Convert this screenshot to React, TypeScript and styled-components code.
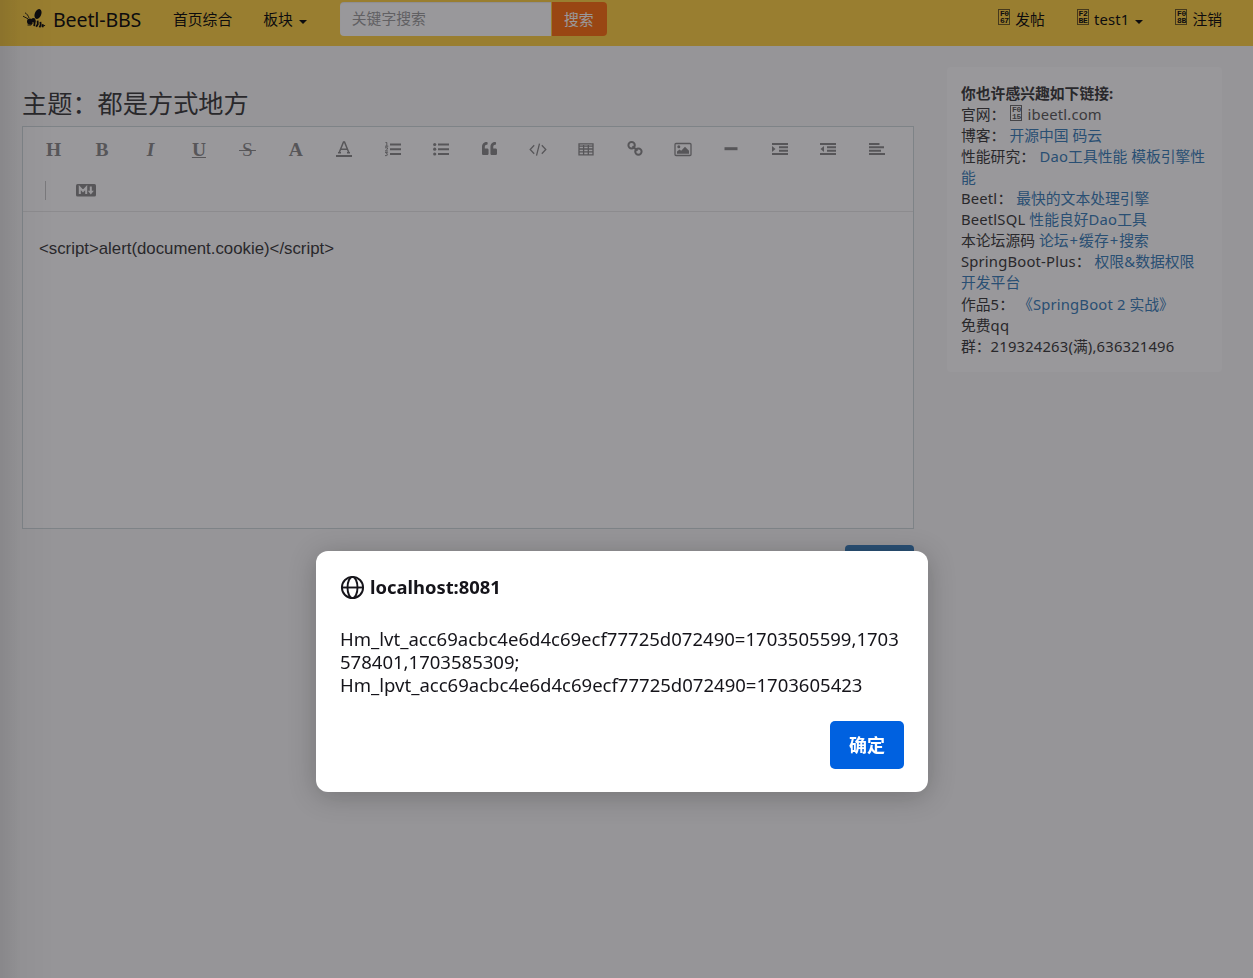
import React from "react";
import styled, { createGlobalStyle } from "styled-components";
import { FaQuoteLeft } from "react-icons/fa";

const GlobalStyle = createGlobalStyle`
  * { box-sizing: border-box; }
  body {
    margin: 0;
    background: #fafafa;
    color: #333;
    font: 14.8px/21.15px "Noto Sans", "Noto Sans CJK SC", sans-serif;
    text-spacing-trim: space-all;
    overflow: hidden;
  }
`;

const Page = styled.div`
  height: 978px;
  width: 1253px;
`;

const Header = styled.header`
  display: flex;
  align-items: flex-start;
  height: 46px;
  padding: 0 31px 0 22px;
  background: #ffd03c;
  color: #000;
`;

const NavText = styled.span<{ $left?: number }>`
  display: flex;
  align-items: center;
  height: 40px;
  margin-left: ${(p) => p.$left ?? 0}px;
  white-space: nowrap;
`;

const Latin = styled.span`
  font-size: 1em;
  letter-spacing: 0.18px;
`;

const Plus = styled.span`
  margin: 0 1px;
`;

const Brand = styled(NavText)`
  width: 120px;
  font-size: 19.6px;

  svg { margin-right: 7px; margin-top: -3px; flex: none; }
  ${Latin} { letter-spacing: -0.15px; }
`;

const Caret = styled.i`
  margin: 3px 0 0 6px;
  border: 4px solid transparent;
  border-top-color: currentColor;
  border-bottom: 0;
`;

const Search = styled.div`
  display: flex;
  height: 34px;
  margin: 2px 0 0 33px;
`;

const SearchInput = styled.div`
  width: 212px;
  padding: 6px 12px;
  border-radius: 4px 0 0 4px;
  border-right: 1px solid #ffd03c;
  background: #fff;
  box-shadow: inset 0 1px 1px rgba(0, 0, 0, 0.08);
  color: #999;
`;

const SearchButton = styled.div`
  width: 55px;
  padding: 7px 1px 0 0;
  border-radius: 0 4px 4px 0;
  background: #ff6b08;
  color: #fff;
  text-align: center;
`;

const UserNav = styled.div`
  display: flex;
  margin-left: auto;
`;

const CodeBox = styled.span`
  display: inline-flex;
  flex-direction: column;
  align-items: center;
  justify-content: center;
  width: 12px;
  height: 16px;
  margin: -6px 5px 0 0;
  border: 1px solid rgba(0, 0, 0, 0.6);
  font: bold 8px/7px "Liberation Mono", monospace;
  letter-spacing: -0.4px;
  vertical-align: middle;
`;

const Main = styled.main`
  display: flex;
  align-items: flex-start;
  padding: 0 31px 0 22px;
`;

const Content = styled.section`
  width: 892px;
  display: flex;
  flex-direction: column;
`;

const Title = styled.h3`
  margin: 40px 0 0;
  height: 40px;
  font-size: 25.2px;
  font-weight: 400;
  line-height: 34px;
`;

const Editor = styled.div`
  height: 403px;
  border: 1px solid #ced9db;
  background: #fff;
`;

const Toolbar = styled.div`
  display: flex;
  flex-wrap: wrap;
  align-content: flex-start;
  height: 85px;
  padding: 1px 0 0 6.5px;
  border-bottom: 1px solid #e8e8e8;
`;

const Tool = styled.span`
  display: flex;
  align-items: center;
  justify-content: center;
  width: 48.42px;
  height: 41.5px;
  color: #888;
`;

const Letter = styled.span<{ $italic?: boolean; $line?: string; $light?: boolean }>`
  margin-top: 2px;
  font-family: "Liberation Serif", serif;
  font-size: 19.5px;
  font-weight: ${(p) => (p.$light ? 400 : 700)};
  font-style: ${(p) => (p.$italic ? "italic" : "normal")};
  text-decoration: ${(p) => p.$line ?? "none"};
  text-decoration-thickness: 1px;
`;

const Struck = styled(Letter)`
  padding: 0 3px;
  background: linear-gradient(currentColor, currentColor) center 11px / 100% 1px no-repeat;
`;

const Separator = styled.span`
  width: 1px;
  height: 19px;
  margin: 11px 16px 0 15.5px;
  background: #c6c6c6;
`;

const Source = styled.div`
  padding: 26px 16px;
  font: 16.81px/22px "Liberation Sans", sans-serif;
`;

const Submit = styled.div`
  align-self: flex-end;
  width: 69px;
  height: 36px;
  margin-top: 16px;
  border-radius: 4px;
  background: #337ab7;
`;

const Aside = styled.aside`
  width: 275px;
  height: 305px;
  margin: 21px 0 0 33px;
  padding: 16px 14px 0;
  border-radius: 4px;
  background: #fff;
`;

const LinkRow = styled.div<{ $bold?: boolean; $top?: number }>`
  height: 21px;
  margin-top: ${(p) => p.$top ?? 0}px;
  font-weight: ${(p) => (p.$bold ? 700 : 400)};
  white-space: nowrap;
`;

const Link = styled.span<{ $gap?: number; $muted?: boolean }>`
  margin-left: ${(p) => p.$gap ?? 0}px;
  color: ${(p) => (p.$muted ? "#555" : "#337ab7")};
`;

const Overlay = styled.div`
  position: fixed;
  inset: 0;
  display: flex;
  justify-content: center;
  align-items: flex-start;
  padding: 551px 9px 0 0;
  background:
    linear-gradient(to right, rgba(0, 0, 0, 0.09), rgba(0, 0, 0, 0.03) 20px, transparent 55px),
    rgba(28, 27, 34, 0.45);
`;

const Dialog = styled.div`
  display: flex;
  flex-direction: column;
  width: 612px;
  height: 241px;
  padding: 24px;
  border-radius: 12px;
  background: #fff;
  box-shadow: 0 4px 28px rgba(0, 0, 0, 0.24);
  color: #15141a;
`;

const Origin = styled.div`
  display: flex;
  align-items: center;
  gap: 5px;
  height: 25px;
  font-size: 18.4px;
  font-weight: 700;
`;

const Host = styled.span`
  padding-bottom: 2px;
`;

const Message = styled.div`
  margin-top: 27px;
  font-size: 18.54px;
  line-height: 23px;
  white-space: pre;
`;

const Confirm = styled.button`
  align-self: flex-end;
  width: 74px;
  height: 48px;
  margin-top: 25px;
  padding: 0 0 2px;
  border: 0;
  border-radius: 5px;
  background: #0061e0;
  color: #fff;
  font: 700 18px/46px "Noto Sans CJK SC", sans-serif;
`;

const Bee = () => (
  <svg width="24" height="21" viewBox="0 0 24 21" fill="currentColor">
    <ellipse cx="16" cy="6" rx="3.2" ry="5.2" transform="rotate(22 16 6)" />
    <ellipse cx="7.8" cy="13.6" rx="2.8" ry="3" />
    <circle cx="11.4" cy="12.2" r="2.2" />
    <g fill="none" stroke="currentColor">
      <path d="M1 8.2 6 10.8M3 4.8c2 1 3.2 2.8 4 5.2" strokeWidth=".9" />
      <path d="M5.5 17h3.2l1.6-2" strokeWidth="1.2" />
      <path d="m12.8 13-.6 5.2M15.6 12.6l.2 3.6-1.6 2.6M18.4 13.8l.3 3-1.2 2.6M21 16.2l-.6 3" strokeWidth="1.8" />
      <path d="m20.5 18.2 2.6-.8" />
    </g>
  </svg>
);

const Code = ({ a, b }: { a: string; b: string }) => (
  <CodeBox>
    <span>{a}</span>
    <span>{b}</span>
  </CodeBox>
);

const Glyph = ({ children }: { children: React.ReactNode }) => (
  <svg width="18" height="16" viewBox="0 0 18 16" fill="currentColor">{children}</svg>
);

const Bars = ({ kind }: { kind: "ol" | "ul" | "indent" | "outdent" | "left" }) => {
  if (kind === "ol")
    return (
      <Glyph>
        <path d="M6 2.5h11v2H6zM6 7.2h11v2H6zM6 12h11v2H6z" />
        <path d="M1.5 1.5h1.3v3.7M1 5.2h3.3M1 6.8h2.5v1.3L1.3 10H4M1 11.6h2.6L2.4 13c2 .2 1.4 2-1.4 1.6" fill="none" stroke="currentColor" />
      </Glyph>
    );
  if (kind === "ul")
    return (
      <Glyph>
        <path d="M6 2.5h11v2H6zM6 7.2h11v2H6zM6 12h11v2H6z" />
        <circle cx="2.7" cy="3.5" r="1.6" /><circle cx="2.7" cy="8.2" r="1.6" /><circle cx="2.7" cy="13" r="1.6" />
      </Glyph>
    );
  if (kind === "left") return <Glyph><path d="M1 2h10.5v2H1zM1 5.3h15v2H1zM1 8.7h12v2H1zM1 12h16v2H1z" /></Glyph>;
  return (
    <Glyph>
      <path d="M1 2h16v2H1zM8 5.3h9v2H8zM8 8.7h9v2H8zM1 12h16v2H1z" />
      <path d={kind === "indent" ? "M1 5v6l3.5-3z" : "M5 5v6L1.5 8z"} />
    </Glyph>
  );
};

export default function App() {
  return (
    <>
      <GlobalStyle />
      <Page>
        <Header>
          <Brand><Bee /><Latin>Beetl-BBS</Latin></Brand>
          <NavText $left={31}>首页综合</NavText>
          <NavText $left={31}>板块<Caret /></NavText>
          <Search>
            <SearchInput>关键字搜索</SearchInput>
            <SearchButton>搜索</SearchButton>
          </Search>
          <UserNav>
            <NavText><Code a="F0" b="67" />发帖</NavText>
            <NavText $left={32}><Code a="F2" b="BE" /><Latin>test1</Latin><Caret /></NavText>
            <NavText $left={32}><Code a="F0" b="8B" />注销</NavText>
          </UserNav>
        </Header>
        <Main>
          <Content>
            <Title>主题：都是方式地方</Title>
            <Editor>
              <Toolbar>
                <Tool><Letter>H</Letter></Tool>
                <Tool><Letter>B</Letter></Tool>
                <Tool><Letter $italic>I</Letter></Tool>
                <Tool><Letter $line="underline">U</Letter></Tool>
                <Tool><Struck $light>S</Struck></Tool>
                <Tool><Letter>A</Letter></Tool>
                <Tool>
                  <Glyph>
                    <path d="M1 14h16v2.3H1z" />
                    <path d="M4 12 8.5 1h1L14 12M5.8 8.3h6.4M3 11.8h3M12 11.8h3" fill="none" stroke="currentColor" strokeWidth="1.5" />
                  </Glyph>
                </Tool>
                <Tool><Bars kind="ol" /></Tool>
                <Tool><Bars kind="ul" /></Tool>
                <Tool><FaQuoteLeft size={15} /></Tool>
                <Tool>
                  <Glyph><path d="M5.2 4.2 1.2 8.5l4 4.3M12.8 4.2l4 4.3-4 4.3M10.5 2.6l-3 12" fill="none" stroke="currentColor" strokeWidth="1.3" /></Glyph>
                </Tool>
                <Tool>
                  <Glyph><path d="M2 2.8h14v11H2zM2 5.2h14M2 8h14M2 10.9h14M6.6 4v10M11.3 4v10" fill="none" stroke="currentColor" strokeWidth="1.3" /></Glyph>
                </Tool>
                <Tool>
                  <Glyph>
                    <g fill="none" stroke="currentColor" strokeWidth="2">
                      <circle cx="5.6" cy="4.2" r="3.2" />
                      <circle cx="12.4" cy="10.6" r="3.2" />
                      <path d="m6.5 5.3 5 4.4" />
                    </g>
                  </Glyph>
                </Tool>
                <Tool>
                  <Glyph>
                    <rect x="1" y="2.5" width="16" height="12" rx="1" fill="none" stroke="currentColor" strokeWidth="1.3" />
                    <circle cx="4.8" cy="5.8" r="1.5" />
                    <path d="M3 12.8v-2.3l2.5-2 1.7 1.3L11 5.7l4 4v3.1z" />
                  </Glyph>
                </Tool>
                <Tool><Glyph><path d="M2.5 6.2h13v3h-13z" /></Glyph></Tool>
                <Tool><Bars kind="indent" /></Tool>
                <Tool><Bars kind="outdent" /></Tool>
                <Tool><Bars kind="left" /></Tool>
                <Separator />
                <Tool>
                  <svg width="20" height="13" viewBox="0 0 20 13">
                    <rect width="20" height="12.5" rx="1.5" fill="currentColor" />
                    <path d="M3.8 10V3.5L7 7l3.2-3.5V10M14.8 2.5v6" fill="none" stroke="#fff" strokeWidth="2" />
                    <path d="M11.8 6.8h6l-3 3.7z" fill="#fff" />
                  </svg>
                </Tool>
              </Toolbar>
              <Source>&lt;script&gt;alert(document.cookie)&lt;/script&gt;</Source>
            </Editor>
            <Submit />
          </Content>
          <Aside>
            <LinkRow $bold>你也许感兴趣如下链接:</LinkRow>
            <LinkRow>官网：<Link $gap={5} $muted><Code a="F0" b="15" /><Latin>ibeetl.com</Latin></Link></LinkRow>
            <LinkRow>博客：<Link $gap={4}>开源中国 码云</Link></LinkRow>
            <LinkRow>性能研究：<Link $gap={4.5}><Latin>Dao</Latin>工具性能 模板引擎性</Link></LinkRow>
            <LinkRow><Link>能</Link></LinkRow>
            <LinkRow><Latin>Beetl</Latin>：<Link $gap={4}>最快的文本处理引擎</Link></LinkRow>
            <LinkRow><Latin>BeetlSQL</Latin><Link $gap={4}>性能良好<Latin>Dao</Latin>工具</Link></LinkRow>
            <LinkRow>本论坛源码<Link $gap={4}>论坛<Plus>+</Plus>缓存<Plus>+</Plus>搜索</Link></LinkRow>
            <LinkRow><Latin>SpringBoot-Plus</Latin>：<Link $gap={4}>权限<Latin>&amp;</Latin>数据权限</Link></LinkRow>
            <LinkRow><Link>开发平台</Link></LinkRow>
            <LinkRow $top={1}>作品<Latin>5</Latin>：<Link $gap={4}>《<Latin>SpringBoot 2</Latin> 实战》</Link></LinkRow>
            <LinkRow>免费<Latin>qq</Latin></LinkRow>
            <LinkRow>群：<Latin>219324263(</Latin>满<Latin>),636321496</Latin></LinkRow>
          </Aside>
        </Main>
      </Page>
      <Overlay>
        <Dialog>
          <Origin>
            <svg width="25" height="25" viewBox="0 0 25 25" fill="none" stroke="currentColor" strokeWidth="1.9">
              <circle cx="12.5" cy="12.5" r="10.6" />
              <ellipse cx="12.5" cy="12.5" rx="5" ry="10.6" />
              <path d="M2 12.5h21" />
            </svg>
            <Host>localhost:8081</Host>
          </Origin>
          <Message>{"Hm_lvt_acc69acbc4e6d4c69ecf77725d072490=1703505599,1703\n578401,1703585309;\nHm_lpvt_acc69acbc4e6d4c69ecf77725d072490=1703605423"}</Message>
          <Confirm>确定</Confirm>
        </Dialog>
      </Overlay>
    </>
  );
}
